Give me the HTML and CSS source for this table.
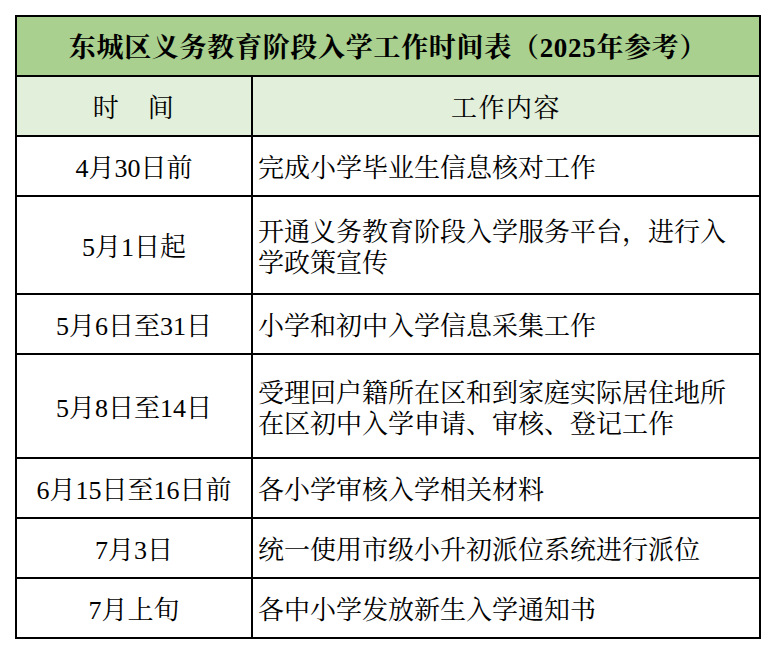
FILE: index.html
```html
<!DOCTYPE html>
<html lang="zh-CN">
<head>
<meta charset="utf-8">
<title>东城区义务教育阶段入学工作时间表</title>
<link rel="stylesheet" href="styles.css">
</head>
<body>
<div class="sheet">
  <div class="cell title">东城区义务教育阶段入学工作时间表（2025年参考）</div>
  <div class="cell head">时　间</div>
  <div class="cell head">工作内容</div>

  <div class="cell date">4月30日前</div>
  <div class="cell task">完成小学毕业生信息核对工作</div>

  <div class="cell date">5月1日起</div>
  <div class="cell task">开通义务教育阶段入学服务平台，进行入<br>学政策宣传</div>

  <div class="cell date">5月6日至31日</div>
  <div class="cell task">小学和初中入学信息采集工作</div>

  <div class="cell date">5月8日至14日</div>
  <div class="cell task">受理回户籍所在区和到家庭实际居住地所<br>在区初中入学申请、审核、登记工作</div>

  <div class="cell date">6月15日至16日前</div>
  <div class="cell task">各小学审核入学相关材料</div>

  <div class="cell date">7月3日</div>
  <div class="cell task">统一使用市级小升初派位系统进行派位</div>

  <div class="cell date">7月上旬</div>
  <div class="cell task">各中小学发放新生入学通知书</div>
</div>
</body>
</html>
```

FILE: styles.css
```css
html, body {
  margin: 0;
  padding: 0;
  background: #ffffff;
}

body {
  font-family: "Liberation Serif", "Noto Serif CJK SC", "Noto Sans CJK SC", serif;
  color: #000000;
}

.sheet {
  margin: 15px 0 0 15px;
  width: 746px;
  box-sizing: border-box;
  padding: 2px;
  background: #000000;
  display: grid;
  grid-template-columns: 234px 506px;
  grid-template-rows: 58px 58px 58px 96px 58px 102px 58px 58px 58px;
  gap: 2px;
}

.cell {
  background: #ffffff;
  display: flex;
  align-items: center;
  box-sizing: border-box;
  padding-top: 5px;
  font-size: 26px;
  line-height: 31px;
}

.title {
  grid-column: 1 / 3;
  background: #a9d08e;
  justify-content: center;
  font-size: 27px;
  font-weight: bold;
  letter-spacing: 0.7px;
}

.head {
  background: #e2efda;
  justify-content: center;
  letter-spacing: 1.5px;
}

.date {
  justify-content: center;
}

.task {
  padding-left: 5px;
}
```
